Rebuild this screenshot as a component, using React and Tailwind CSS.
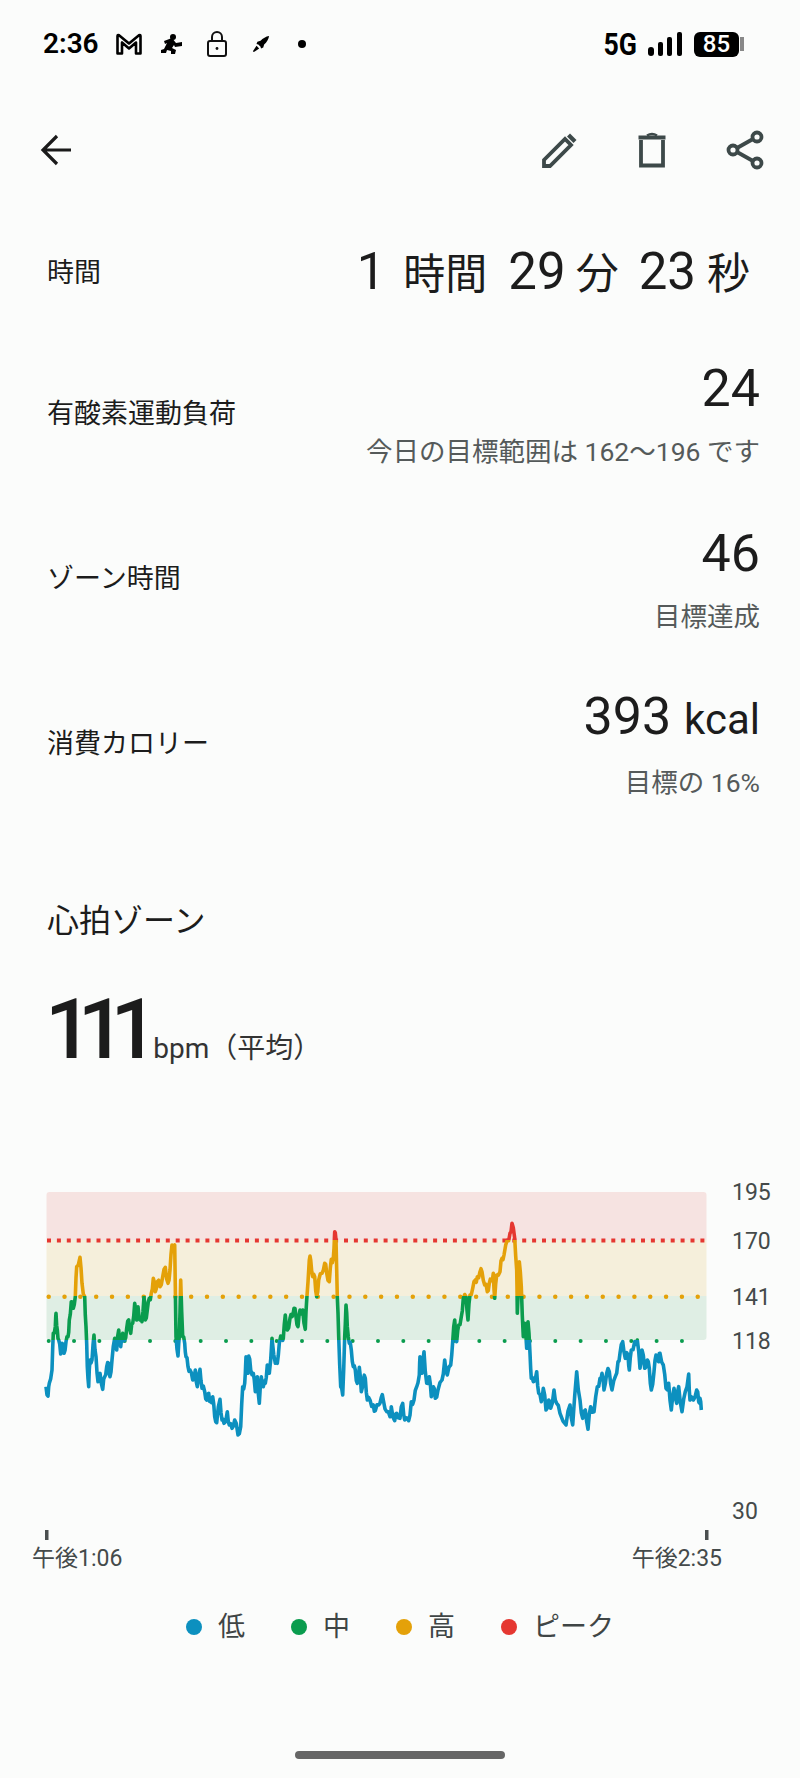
const font = '[font-family:Roboto,"Noto_Sans_CJK_JP",sans-serif]';

// traced from the screenshot, in crop coordinates (left crop: x = 30 + zx / 3, right crop: x = 400 + zx / 3, y = 1170 + zy / 3)
const leftTrace = [
  48,650, 54,678, 58,640, 66,600, 70,490, 76,470, 78,430, 82,480, 86,510, 92,552, 96,520, 102,550, 108,515, 114,500, 118,450,
  124,395, 130,415, 136,380, 140,290, 150,262, 156,340, 164,380, 168,470, 172,590, 176,650, 180,570, 186,570, 192,495, 198,560,
  204,635, 210,610, 218,658, 224,620, 230,590, 236,580, 240,620, 246,570, 254,505, 260,540, 266,480, 272,530, 278,490, 284,510,
  290,475, 296,450, 302,490, 308,460, 314,400, 320,450, 324,410, 330,450, 336,455, 342,380, 346,450, 352,420, 358,385, 364,370,
  370,325, 376,365, 382,335, 390,350, 398,320, 406,292, 414,340, 420,300, 426,225, 434,225, 438,500, 444,558, 448,500, 452,330,
  458,500, 464,520, 468,560, 474,590, 480,600, 488,630, 496,600, 502,650, 510,598, 516,655, 524,665, 530,690, 536,670, 542,695,
  548,680, 554,740, 560,758, 570,688, 576,750, 582,760, 592,725, 598,765, 606,775, 614,750, 624,795, 632,770, 638,650, 644,640,
  648,560, 654,610, 656,558, 662,600, 670,610, 676,665, 682,620, 688,700, 694,620, 700,650, 706,640, 712,585, 718,610, 726,505,
  736,580, 742,580, 748,520, 756,500, 760,505, 766,435, 772,480, 780,445, 786,440, 792,415, 798,440, 804,470, 810,420, 818,420,
  826,478, 830,390, 838,270, 842,270, 848,320, 854,320, 860,380, 866,330, 876,310, 884,280, 890,310, 898,335, 904,268, 910,265,
  914,185, 918,210, 922,380, 926,500, 932,650, 938,675, 944,500, 948,405, 952,470, 958,520, 964,540, 970,590, 976,600, 982,640,
  988,592, 994,665, 1000,630, 1006,625, 1012,690, 1020,690, 1030,705, 1036,722, 1046,705, 1054,682, 1060,690, 1070,725, 1080,740,
  1084,710, 1094,752, 1100,730,
];
const rightTrace = [
  0,745, 8,700, 14,750, 26,752, 34,695, 42,690, 50,650, 58,615, 60,560, 66,610, 72,545, 80,640, 88,620, 94,680, 100,650, 106,685,
  114,660, 126,630, 134,570, 142,615, 152,585, 158,515, 164,450, 170,515, 176,465, 184,440, 190,385, 198,380, 204,450, 210,375,
  218,355, 226,330, 232,320, 240,305, 246,305, 254,345, 262,365, 268,340, 274,330, 280,310, 284,385, 290,315, 300,305, 306,265,
  312,255, 322,210, 330,190, 336,160, 344,205, 350,300, 352,430, 358,275, 364,350, 370,500, 374,460, 380,535, 384,455, 390,550,
  394,625, 400,635, 410,605, 416,670, 424,695, 430,655, 438,720, 446,690, 452,715, 462,660, 470,700, 480,730, 498,765, 510,705,
  518,765, 530,605, 540,690, 548,745, 556,720, 564,778, 572,710, 582,725, 592,650, 600,625, 606,610, 612,660, 620,610, 628,605,
  636,660, 646,620, 654,575, 660,550, 668,515, 676,565, 684,555, 688,600, 694,540, 704,515, 712,510, 720,595, 726,540, 734,595,
  742,570, 748,595, 754,660, 762,605, 768,555, 776,575, 780,550, 790,585, 798,655, 806,640, 814,720, 822,655, 830,700, 836,650,
  846,725, 856,665, 866,612, 870,690, 880,690, 890,660, 896,695, 900,685, 904,720,
];

const toPoints = (trace, originX) => {
  const out = [];
  for (let i = 0; i < trace.length; i += 2) {
    out.push([originX + trace[i] / 3, 1170 + trace[i + 1] / 3]);
  }
  return out;
};

// the real line is noisier than the trace, so add a jittered point between each pair
const traced = [...toPoints(leftTrace, 30), ...toPoints(rightTrace, 400)];
const hrLine = traced
  .flatMap((p, i) => {
    const next = traced[i + 1];
    if (!next) return [p];
    const jitter = [3.5, -3, 2, -4, 3, -2.5, 4][i % 7];
    return [p, [(p[0] + next[0]) / 2, (p[1] + next[1]) / 2 + jitter]];
  })
  .map(([x, y]) => `${x.toFixed(1)},${y.toFixed(1)}`)
  .join(' ');

const zones = [
  { id: 'peak', color: '#e53731', y: 1170, h: 70 },
  { id: 'high', color: '#e4a109', y: 1240, h: 56 },
  { id: 'mid', color: '#0a9c4e', y: 1296, h: 44 },
  { id: 'low', color: '#0c90bf', y: 1340, h: 180 },
];

const axisLabels = [
  ['195', 1200],
  ['170', 1249],
  ['141', 1305],
  ['118', 1349],
  ['30', 1519],
];

const legend = [
  ['低', 'bg-[#0c90bf]', 'w-[59px]'],
  ['中', 'bg-[#0a9c4e]', 'w-[59px]'],
  ['高', 'bg-[#e4a109]', 'w-[59px]'],
  ['ピーク', 'bg-[#e53731]', 'w-[113px]'],
];

function StatusBar() {
  return (
    <div className="h-[88px] flex items-center justify-between pl-[43px] pr-[56px] text-black">
      <div className="flex items-center">
        <span className="w-[72px] text-[28px] leading-none font-semibold">2:36</span>
        <svg width="28" height="24" viewBox="0 0 28 24" fill="none" stroke="black" strokeWidth="2.6">
          <path d="M2.5 21.5V4.2Q2.5 2.5 4 3.2L14 11.5L24 3.2Q25.5 2.5 25.5 4.2V21.5H21V10.5L14 16.5L7 10.5V21.5Z" strokeLinejoin="round" />
        </svg>
        <svg className="ml-[18px]" width="22" height="22" viewBox="0 0 22 22" fill="black">
          <circle cx="12" cy="4" r="3" />
          <path d="M3 8L11 5L15 10L21 9L21 13L14 14L13 12L11 15L15 17L14 21H10L10 18L6 17L5 20L0 20L0 17L3 16L6 10L4 11Z" />
        </svg>
        <svg className="ml-[24px]" width="20" height="26" viewBox="0 0 20 26" fill="none" stroke="#111" strokeWidth="2">
          <rect x="1" y="10" width="18" height="15" rx="2" />
          <path d="M5 10V6a5 5 0 0 1 10 0V10" />
          <circle cx="10" cy="17.5" r="1.4" fill="#111" stroke="none" />
        </svg>
        <svg className="ml-[25px]" width="18" height="18" viewBox="0 0 20 20" fill="black">
          <path d="M19 1C15.500 1.500 12 3.500 9.500 6.500L6 7.500L5 10L7 10.500L9.500 13L10 15L12.500 14L13.500 10.500C16.500 8 18.500 4.500 19 1Z" />
          <path d="M5 12L8 15L2 19L1 18Z" />
        </svg>
        <span className="ml-[28px] w-[8px] h-[8px] rounded-full bg-black" />
      </div>
      <div className="flex items-center">
        <span className="text-[31px] leading-none font-bold scale-x-[0.86] origin-right">5G</span>
        <svg className="ml-[10px]" width="36" height="24" viewBox="0 0 36 24" fill="black">
          <rect x="1" y="15" width="6" height="9" rx="3" />
          <rect x="11" y="10" width="5" height="14" rx="2" />
          <rect x="20" y="5" width="5" height="19" rx="2" />
          <rect x="30" y="0" width="5" height="24" rx="2" />
        </svg>
        <div className="ml-[11px] w-[45px] h-[25px] bg-black rounded-[6px] text-white text-[24px] leading-[25px] font-medium text-center">85</div>
        <div className="ml-[1px] w-[4px] h-[14px] bg-[#888]" />
      </div>
    </div>
  );
}

function NavBar() {
  return (
    <div className="h-[124px] flex items-center justify-between pl-[40px] pr-[36px]">
      <svg width="32" height="32" viewBox="0 0 32 32" fill="none" stroke="#1a1a1a" strokeWidth="3.200">
        <path d="M31 16H3M17 2L3 16L17 30" />
      </svg>
      <div className="flex items-center">
        <svg width="36" height="36" viewBox="0 0 36 36" fill="none" stroke="#3d4949" strokeWidth="3.800">
          <path d="M2 34V28L23 7L29 13L8 34Z" strokeLinejoin="miter" />
          <path d="M28 1.500L34.500 8L31.500 11L25 4.500Z" fill="#3d4949" stroke="none" />
        </svg>
        <svg className="ml-[60px]" width="28" height="36" viewBox="0 0 28 36" fill="none" stroke="#3d4949" strokeWidth="3.800">
          <path d="M0.500 5.500H27.500" strokeWidth="4" />
          <path d="M9 3.500Q14 0.500 19 3.500" strokeWidth="2.500" />
          <path d="M3 8V33.500H25V8" />
        </svg>
        <svg className="ml-[60px]" width="38" height="40" viewBox="0 0 38 40" fill="none" stroke="#3d4949" strokeWidth="3.800">
          <circle cx="31" cy="7" r="4.500" />
          <circle cx="7" cy="20" r="4.500" />
          <circle cx="31" cy="33" r="4.500" />
          <path d="M11 18L27 9M11 22L27 31" />
        </svg>
      </div>
    </div>
  );
}

function StatRow({ label, value, sub, h }) {
  return (
    <div className={`flex items-center justify-between pl-[47px] pr-[40px] ${h}`}>
      <span className="text-[27px] leading-none text-[#1c1c1c]">{label}</span>
      <div className="flex flex-col items-end">
        <div className="text-[52px] leading-[56px] text-[#1c1c1c] whitespace-pre">{value}</div>
        {sub && <div className="mt-[18px] text-[26.500px] leading-[34px] text-[#555a5a] whitespace-pre">{sub}</div>}
      </div>
    </div>
  );
}

function DurationRow() {
  return (
    <div className="mt-[2px] flex items-center justify-between pl-[47px] pr-[50px] h-[118px]">
      <span className="text-[27px] leading-none text-[#1c1c1c]">時間</span>
      <div className="flex items-baseline text-[51px] leading-[56px] text-[#1c1c1c]">
        <span>1</span>
        <span className="ml-[18px] text-[42px]">時間</span>
        <span className="ml-[21px]">29</span>
        <span className="ml-[10px] text-[43px]">分</span>
        <span className="ml-[20px]">23</span>
        <span className="ml-[11px] text-[43px]">秒</span>
      </div>
    </div>
  );
}

function HeartChart() {
  return (
    <svg width="800" height="370" viewBox="0 1170 800 370" className="block">
      <defs>
        <clipPath id="bands">
          <rect x="46.500" y="1192" width="660" height="148" rx="3" />
        </clipPath>
        {zones.map((z) => (
          <clipPath id={z.id} key={z.id}>
            <rect x="0" y={z.y} width="800" height={z.h} />
          </clipPath>
        ))}
      </defs>
      <g clipPath="url(#bands)">
        <rect x="46" y="1192" width="662" height="48" fill="#f6e3e1" />
        <rect x="46" y="1240" width="662" height="56" fill="#f5efdb" />
        <rect x="46" y="1296" width="662" height="44" fill="#dfeee4" />
      </g>
      <line x1="47" x2="706" y1="1240.500" y2="1240.500" stroke="#e53731" strokeWidth="4" strokeDasharray="4 5.900" />
      <line x1="48.700" x2="706" y1="1296.700" y2="1296.700" stroke="#e4a109" strokeWidth="4.500" strokeDasharray="0 15.830" strokeLinecap="round" />
      <line x1="48.700" x2="706" y1="1341" y2="1341" stroke="#0a9c4e" strokeWidth="4" strokeDasharray="0 25.330" strokeLinecap="round" />
      {zones.map((z) => (
        <polyline
          key={z.id}
          points={hrLine}
          clipPath={`url(#${z.id})`}
          fill="none"
          stroke={z.color}
          strokeWidth="3.600"
          strokeLinejoin="round"
        />
      ))}
      <rect x="45" y="1530" width="3.500" height="10" fill="#4a4f4f" />
      <rect x="705" y="1530" width="3.500" height="10" fill="#4a4f4f" />
      {axisLabels.map(([t, y]) => (
        <text key={t} x="732" y={y} fontSize="23" fill="#444a4a">{t}</text>
      ))}
    </svg>
  );
}

export default function App() {
  return (
    <div className={`relative w-[800px] h-[1778px] overflow-hidden bg-[#fbfcfb] ${font}`}>
      <StatusBar />
      <NavBar />
      <DurationRow />
      <StatRow h="h-[165px]" label="有酸素運動負荷" value="24" sub="今日の目標範囲は 162〜196 です" />
      <StatRow h="h-[165px]" label="ゾーン時間" value="46" sub="目標達成" />
      <StatRow h="h-[165px]" label="消費カロリー" value={<>393 <span className="text-[42px]">kcal</span></>} sub="目標の 16%" />

      <div className="mt-[74px] pl-[47px] text-[32px] leading-[40px] text-[#1c1c1c]">心拍ゾーン</div>
      <div className="mt-[39px] pl-[45px] flex items-baseline text-[#1c1c1c]">
        <span className="text-[84px] leading-[100px] font-medium tracking-[-15px]">111</span>
        <span className="ml-[10px] text-[28px] text-[#333]">bpm（平均）</span>
      </div>

      <div className="mt-[90px]">
        <HeartChart />
      </div>

      <div className="mt-[2px] flex justify-between pl-[32px] pr-[78px] text-[23px] leading-[34px] text-[#444a4a]">
        <span>午後1:06</span>
        <span>午後2:35</span>
      </div>

      <div className="mt-[34px] flex justify-center gap-[46px] text-[27px] leading-[34px] text-[#3f4545]">
        {legend.map(([t, dot, w]) => (
          <div key={t} className={`flex items-center gap-[16px] ${w}`}>
            <span className={`w-[16px] h-[16px] shrink-0 rounded-full ${dot}`} />
            <span className="shrink-0">{t}</span>
          </div>
        ))}
      </div>

      <div className="mt-[107px] mx-auto w-[210px] h-[8px] rounded-full bg-[#666]" />
    </div>
  );
}
